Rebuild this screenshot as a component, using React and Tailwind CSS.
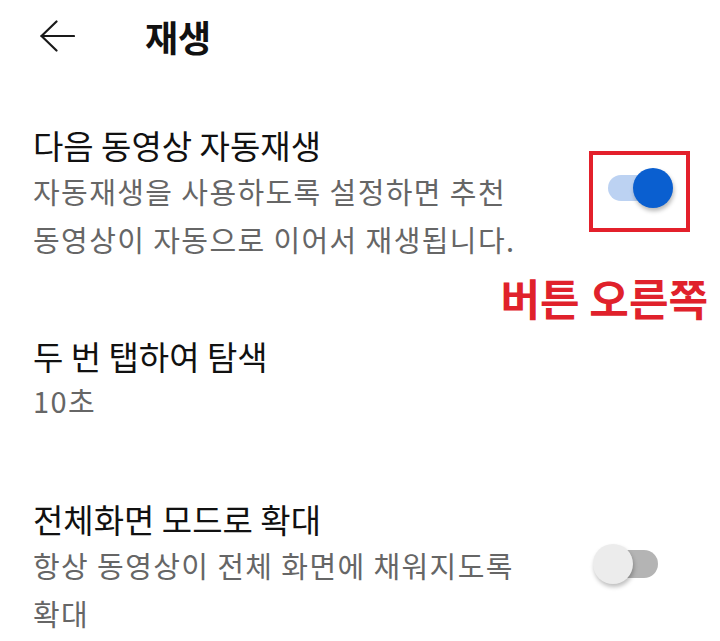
import React from "react";

const font = { fontFamily: '"Noto Sans CJK KR", "Noto Sans", sans-serif' };

function Toggle({ on }) {
  return (
    <div className="relative w-[65px] h-[40px] shrink-0">
      {on ? (
        <>
          <div className="absolute left-0 top-[7px] w-[54px] h-[26px] rounded-full bg-[#bcd2f2]" />
          <div className="absolute right-0 top-0 w-[40px] h-[40px] rounded-full bg-[#0a5fd0] shadow-[1px_3px_4px_rgba(0,0,0,0.28)]" />
        </>
      ) : (
        <>
          <div className="absolute right-0 top-[6px] w-[54px] h-[28px] rounded-full bg-[#b4b4b4]" />
          <div className="absolute left-0 top-0 w-[40px] h-[40px] rounded-full bg-[#ececec] shadow-[1px_3px_4px_rgba(0,0,0,0.25)]" />
        </>
      )}
    </div>
  );
}

export default function App() {
  return (
    <div className="w-[720px] h-[641px] bg-white overflow-hidden" style={font}>
      {/* header */}
      <div className="flex items-center pt-[16px] h-[56px]">
        <svg className="ml-[40px]" width="35" height="32" viewBox="0 0 35 32" fill="none" stroke="#1a1a1a" strokeWidth="2.2" strokeLinecap="round" strokeLinejoin="round">
          <path d="M34 16H1.5" />
          <path d="M16.5 1.5L1.5 16L16.5 30.5" />
        </svg>
        <div className="ml-[70px] text-[36px] leading-[40px] font-bold text-[#111]">재생</div>
      </div>

      {/* autoplay next */}
      <div className="flex justify-between pl-[33px] pr-[30px] mt-[69px]">
        <div>
          <div className="text-[33px] leading-[40px] text-[#111]">다음 동영상 자동재생</div>
          <div className="mt-[2px] text-[29px] leading-[48px] tracking-[1.4px] text-[#666]">
            자동재생을 사용하도록 설정하면 추천
            <br />
            동영상이 자동으로 이어서 재생됩니다.
          </div>
        </div>
        <div className="mt-[26px] w-[101px] h-[81px] border-4 border-[#e3202b] pl-[15px] pt-[13px] shrink-0">
          <Toggle on />
        </div>
      </div>

      <div className="flex justify-end pr-[12px] mt-[9px]">
        <div className="text-[43px] leading-[50px] font-bold text-[#e0212b]">버튼 오른쪽</div>
      </div>

      {/* double tap seek */}
      <div className="pl-[33px] mt-[14px]">
        <div className="text-[33px] leading-[40px] text-[#111]">두 번 탭하여 탐색</div>
        <div className="text-[29px] leading-[48px] tracking-[1.4px] text-[#666]">10초</div>
      </div>

      {/* zoom to fill */}
      <div className="flex justify-between pl-[33px] pr-[62px] mt-[75px]">
        <div>
          <div className="text-[33px] leading-[40px] text-[#111]">전체화면 모드로 확대</div>
          <div className="mt-[2px] text-[29px] leading-[48px] tracking-[1.4px] text-[#666]">
            항상 동영상이 전체 화면에 채워지도록
            <br />
            확대
          </div>
        </div>
        <div className="mt-[45px]">
          <Toggle on={false} />
        </div>
      </div>
    </div>
  );
}
